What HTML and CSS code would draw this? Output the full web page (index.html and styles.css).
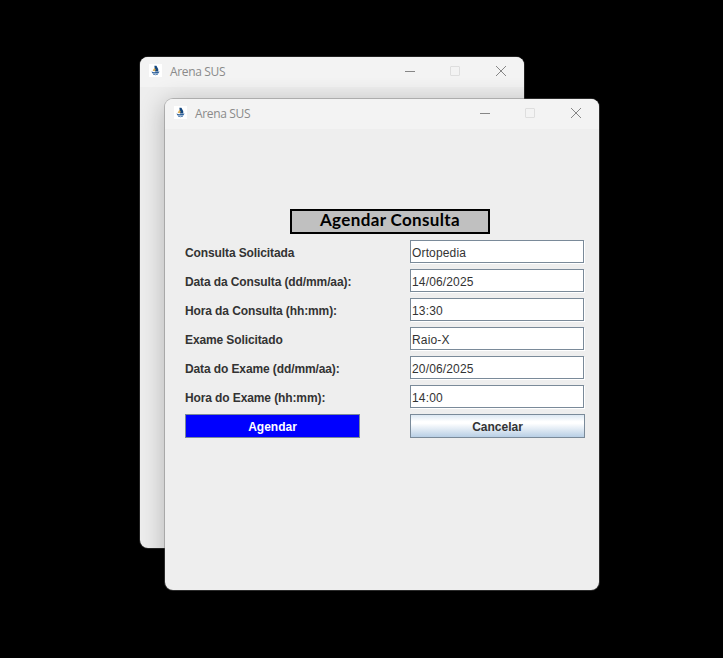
FILE: index.html
```html
<!DOCTYPE html>
<html lang="pt-BR">
<head>
<meta charset="utf-8">
<title>Arena SUS</title>
<link rel="stylesheet" href="styles.css">
</head>
<body>
<svg class="defs" width="0" height="0">
  <symbol id="logo" viewBox="0 0 13 13">
    <rect width="13" height="13" fill="#fff"/>
    <path d="M5.4 1.8H7.4L9.2 5L9.3 7.4H6Z" fill="#14477f"/>
    <path d="M5.6 3.4L6.8 6L5.6 7.2L3.6 6.8Z" fill="#d9ad58"/>
    <path d="M2.4 7.4L5 8.2L10.6 7.4L9.3 9.4H3.6Z" fill="#2c609b"/>
    <path d="M4 10.2Q6.5 11.3 9 10.2" fill="none" stroke="#5e88b6"/>
  </symbol>
  <symbol id="controls" viewBox="0 0 104 12">
    <path d="M1 6.5H11" stroke="#868686"/>
    <rect x="46.5" y="1.5" width="9" height="9" rx=".5" fill="none" stroke="#dedede"/>
    <path d="M92 1L102 11M102 1L92 11" stroke="#868686"/>
  </symbol>
</svg>
<section class="window window-back">
  <header class="titlebar"><svg class="logo"><use href="#logo"/></svg><span class="caption">Arena SUS</span><svg class="controls"><use href="#controls"/></svg></header>
</section>
<section class="window window-front">
  <header class="titlebar"><svg class="logo"><use href="#logo"/></svg><span class="caption">Arena SUS</span><svg class="controls"><use href="#controls"/></svg></header>
  <main class="content">
    <h1 class="heading"><span>Agendar Consulta</span></h1>
    <form class="form">
      <label for="f1">Consulta Solicitada</label><input id="f1" value="Ortopedia">
      <label for="f2">Data da Consulta (dd/mm/aa):</label><input id="f2" value="14/06/2025">
      <label for="f3">Hora da Consulta (hh:mm):</label><input id="f3" value="13:30">
      <label for="f4">Exame Solicitado</label><input id="f4" value="Raio-X">
      <label for="f5">Data do Exame (dd/mm/aa):</label><input id="f5" value="20/06/2025">
      <label for="f6">Hora do Exame (hh:mm):</label><input id="f6" value="14:00">
      <button type="button" class="primary">Agendar</button><button type="button" class="secondary">Cancelar</button>
    </form>
  </main>
</section>
</body>
</html>
```
FILE: styles.css
```css
* { box-sizing: border-box; }
body { margin: 0; height: 658px; position: relative; overflow: hidden; background: #000; color: #333; font: 12px "Liberation Sans", sans-serif; }
.defs { position: absolute; }
.window { position: absolute; overflow: hidden; border-radius: 8px; background: #eee; }
.window-back { left: 140px; top: 57px; width: 384px; height: 491px; box-shadow: 0 0 0 1px #222; }
.window-front { left: 165px; top: 99px; width: 434px; height: 491px; box-shadow: 0 0 0 1px rgba(110,110,110,.4), 0 5px 24px 2px rgba(0,0,0,.24); }
.titlebar { display: flex; height: 30px; padding: 0 16px 0 9px; background: #f3f3f3; }
.logo { width: 13px; height: 13px; margin-top: 7px; }
.caption { margin: 0 auto 0 8px; font: 12px/30px "Open Sans", sans-serif; letter-spacing: -.35px; color: #8a8a8a; }
.controls { width: 104px; height: 12px; margin-top: 8px; }
.content { padding: 80px 14px 0 20px; }
.heading { width: 200px; height: 25px; margin: 0 0 6px 105px; border: 2px solid #000; background: #c0c0c0; color: #000; font: bold 17px/18px Lato, sans-serif; letter-spacing: .36px; text-align: center; }
.form { display: grid; grid-template-columns: 175px 175px; grid-auto-rows: 24px; gap: 5px 50px; }
label { font-weight: bold; line-height: 26px; letter-spacing: -.11px; white-space: nowrap; }
input { width: 174px; height: 23px; margin: 0; padding: 2px 1px 0; border: 1px solid #7a8a99; border-radius: 0; box-shadow: 1px 1px 0 #fff; background: #fff; color: #333; font: 12px "Liberation Sans", sans-serif; letter-spacing: .15px; outline: 0; }
button { height: 24px; margin: 0; padding: 1px 0 0; border: 1px solid #7a8a99; border-radius: 0; font: bold 12px "Liberation Sans", sans-serif; }
.primary { background: #00f; color: #fff; }
.secondary { background: linear-gradient(#dde8f3 0%, #fff 30%, #fff 38%, #b8cfe5 100%); color: #333; }
```
